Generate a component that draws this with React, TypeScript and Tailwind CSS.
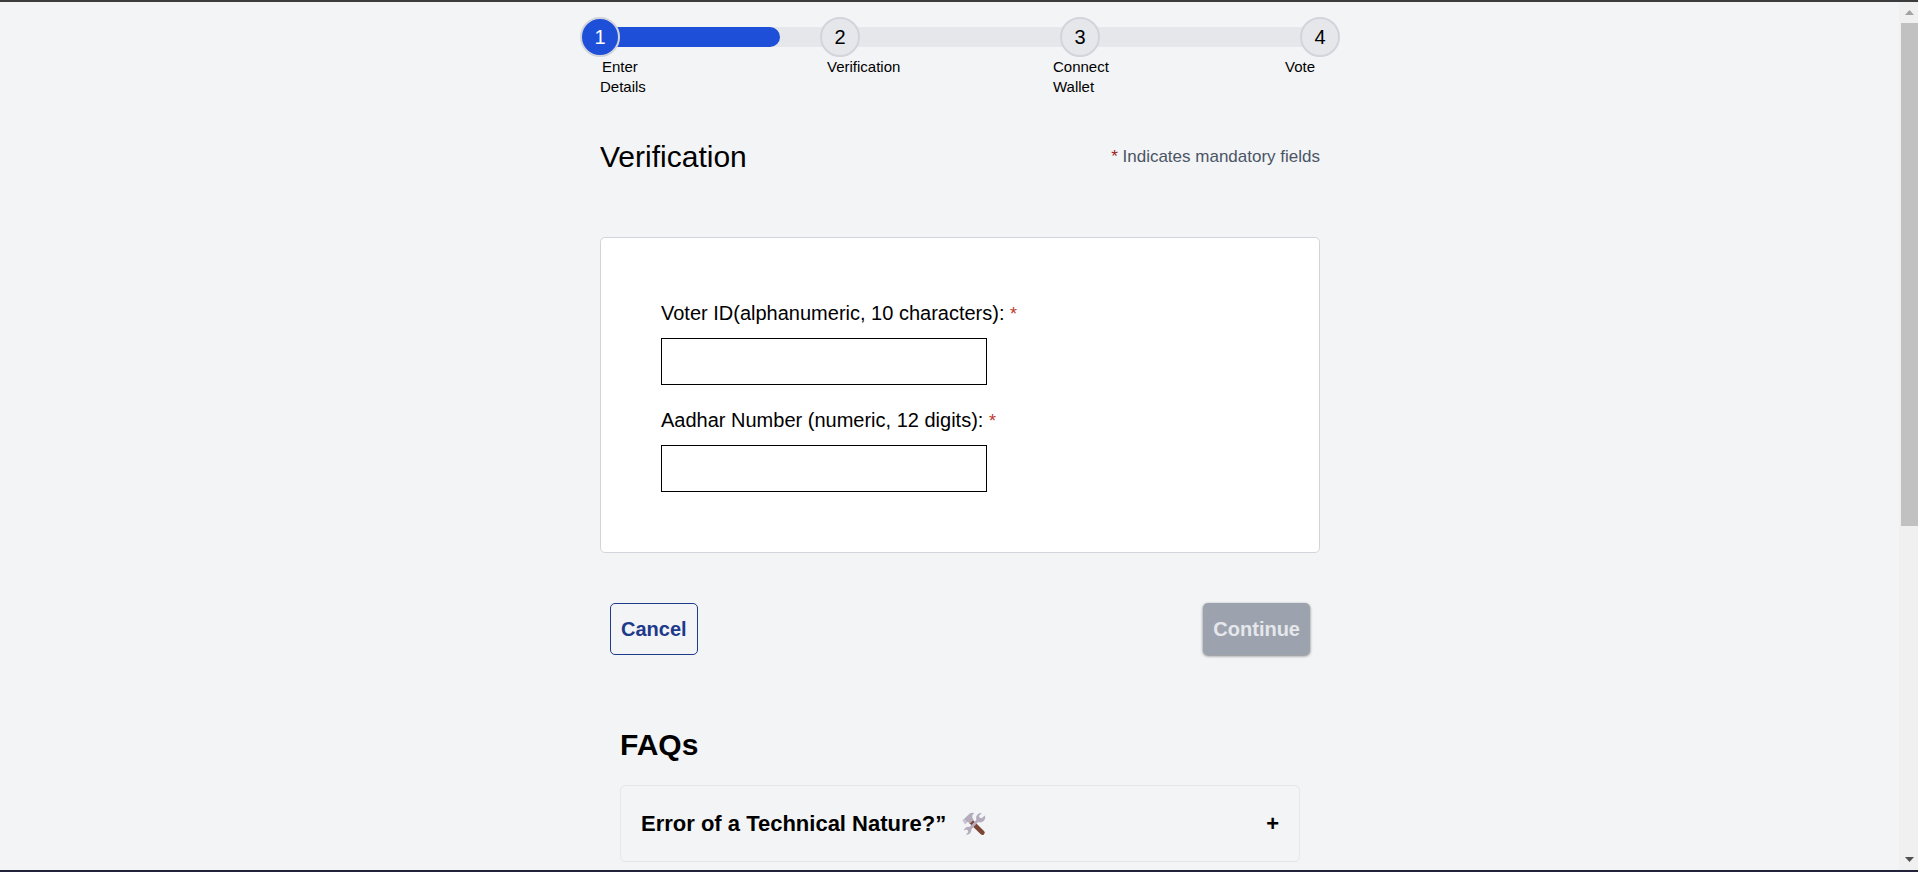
import { useState } from "react";

const steps = [1, 2, 3, 4];

function StepBar({ current }: { current: number }) {
  return (
    <nav aria-label="Progress">
      <div className="relative flex h-5 items-center bg-gray-200">
        <div className="h-5 w-1/4 rounded-r-full bg-[#1d4fd8]" />
        <ol className="absolute -inset-x-5 flex items-center justify-between">
          {steps.map((step) => (
            <li
              key={step}
              className={
                step === current
                  ? "flex size-10 items-center justify-center rounded-full border-2 border-[#d1d5db] bg-[#1d4fd8] text-xl text-white"
                  : "flex size-10 items-center justify-center rounded-full border-2 border-[#d3d4dc] bg-[#e5e7eb] text-xl text-black"
              }
            >
              {step}
            </li>
          ))}
        </ol>
      </div>
      <div className="mt-2.5 grid grid-cols-[227fr_226fr_232fr_35fr] text-[15px] leading-5">
        <div>
          <span className="block pl-0.5">Enter</span>
          <span className="block">Details</span>
        </div>
        <div>Verification</div>
        <div>
          <span className="block">Connect</span>
          <span className="block">Wallet</span>
        </div>
        <div>Vote</div>
      </div>
    </nav>
  );
}

function Field({ id, label }: { id: string; label: string }) {
  const [value, setValue] = useState("");
  return (
    <div>
      <label htmlFor={id} className="block text-xl leading-[30px]">
        {label} <span className="text-lg leading-none text-[#c0392b]">*</span>
      </label>
      <input
        id={id}
        type="text"
        value={value}
        onChange={(e) => setValue(e.target.value)}
        className="mt-2.5 block h-[47px] w-[326px] max-w-full border border-black bg-white px-2.5 text-xl"
      />
    </div>
  );
}

function ToolsIcon() {
  return (
    <svg viewBox="0 0 24 24" className="size-6" aria-hidden="true">
      <path d="M9 9.5 L20.4 20.6" stroke="#7d4533" strokeWidth="4.6" strokeLinecap="round" />
      <path d="M0.5 8.5 L8 1.2 Q10 0.2 12.2 1 Q9.8 3 10.2 5.2 L11.6 8 L8 11.6 L5.8 9.8 L3.2 12.2 Z" fill="#b4acbc" />
      <path d="M0.5 8.5 L2.2 7 L5 10 L3.2 12.2 Z" fill="#cdc4d6" />
      <path
        d="M22.8 3.6 L19.6 6.2 L17.4 5.6 L17 3.8 L19.8 1.2 A5 5 0 0 0 14.3 8 L7.4 15 A4.6 4.6 0 0 0 1.8 18.4 L4.4 17.4 L6 18.4 L6.2 20.2 L4 22.6 A4.6 4.6 0 0 0 9.4 17.2 L16.2 10 A5 5 0 0 0 22.8 3.6 Z"
        fill="#b4acbc"
      />
    </svg>
  );
}

function ScrollTrack() {
  return (
    <div className="flex w-[19px] shrink-0 flex-col items-center bg-[#f0f0f0] pl-0.5" aria-hidden="true">
      <div className="flex h-[21px] items-center">
        <svg viewBox="0 0 9 5" className="h-[5px] w-[9px]">
          <path d="M0 5 L4.5 0 L9 5 Z" fill="#a3a3a3" />
        </svg>
      </div>
      <div className="h-[503px] w-full bg-[#c1c1c1]" />
      <div className="mt-auto flex h-[21px] items-center">
        <svg viewBox="0 0 9 5" className="h-[5px] w-[9px]">
          <path d="M0 0 L4.5 5 L9 0 Z" fill="#505050" />
        </svg>
      </div>
    </div>
  );
}

export default function App() {
  return (
    <div className="flex h-screen overflow-hidden border-t-2 border-b-2 border-t-[#3c3c3c] border-b-[#22223a] bg-[#f3f4f6] font-['Liberation_Sans',Arial,sans-serif] text-black">
      <main className="min-w-0 flex-1 overflow-hidden pl-[21px]">
        <div className="mx-auto max-w-[720px] pt-[25px]">
          <StepBar current={1} />

          <header className="mt-10 flex items-center justify-between">
            <h1 className="text-3xl leading-10">Verification</h1>
            <p className="text-[17px] text-gray-600">
              <span className="text-[#991b1b]">*</span> Indicates mandatory fields
            </p>
          </header>

          <form>
            <div className="mt-[60px] flex flex-col gap-5 rounded-[5px] border border-[#d1d5db] bg-white p-[60px]">
              <Field id="voter-id" label="Voter ID(alphanumeric, 10 characters):" />
              <Field id="aadhar" label="Aadhar Number (numeric, 12 digits):" />
            </div>

            <div className="mt-[50px] flex items-center justify-between px-2.5">
              <button
                type="button"
                className="h-[52px] rounded-[5px] border border-[#1e3a8a] px-2.5 text-xl font-bold text-[#1e3a8a]"
              >
                Cancel
              </button>
              <button
                type="submit"
                disabled
                className="h-[52px] rounded-[5px] bg-[#9ca3af] px-2.5 text-xl font-bold text-gray-200 shadow-[0_1px_3px_rgba(0,0,0,0.5)]"
              >
                Continue
              </button>
            </div>
          </form>

          <section className="mt-[70px] px-5">
            <h2 className="text-3xl leading-10 font-bold">FAQs</h2>
            <button
              type="button"
              className="mt-5 flex w-full items-center justify-between rounded-[5px] border border-gray-200 px-5 py-5 text-left"
            >
              <span className="flex items-center gap-4 text-[22px] leading-[35px] font-bold">
                Error of a Technical Nature?” <ToolsIcon />
              </span>
              <span className="text-[22px] leading-none font-bold">+</span>
            </button>
          </section>
        </div>
      </main>
      <ScrollTrack />
    </div>
  );
}
